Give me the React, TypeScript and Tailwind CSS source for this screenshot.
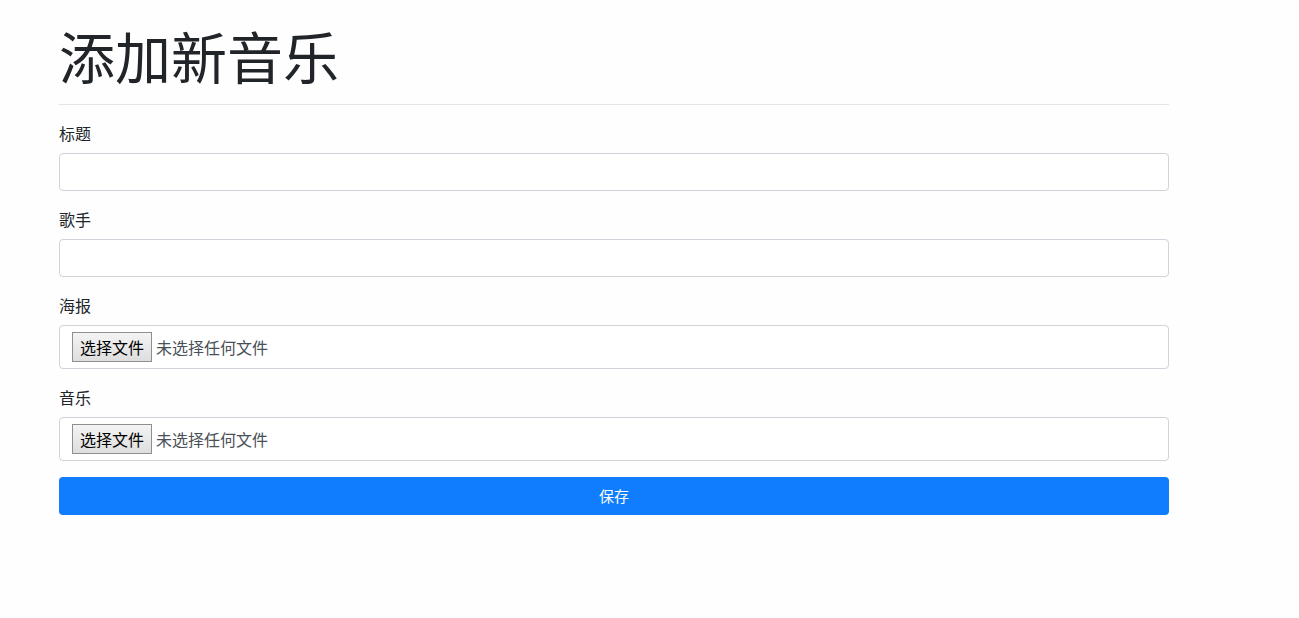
import React from 'react';

const font = { fontFamily: '"Noto Sans CJK SC", "Liberation Sans", sans-serif' };

function TextField({ label }: { label: string }) {
  return (
    <div className="mb-4">
      <label className="mb-2 block text-base leading-6 text-[#212529]">{label}</label>
      <input
        type="text"
        className="block h-[38px] w-full rounded border border-[#ced4da] bg-white px-3 text-base text-[#495057] outline-none"
      />
    </div>
  );
}

function FileField({ label }: { label: string }) {
  return (
    <div className="mb-4">
      <label className="mb-2 block text-base leading-6 text-[#212529]">{label}</label>
      <div className="flex h-[44px] w-full items-center rounded border border-[#ced4da] bg-white px-3">
        <span className="flex h-[30px] items-center border border-[#8f8f8f] bg-gradient-to-b from-[#f4f4f4] to-[#dedede] px-[7px] text-base leading-none text-black">
          选择文件
        </span>
        <span className="ml-1 text-base text-[#495057]">未选择任何文件</span>
      </div>
    </div>
  );
}

export default function App() {
  return (
    <div className="min-h-screen bg-[#fefefe]" style={font}>
      <div className="ml-[59px] w-[1110px] pt-[21px]">
        <h1 className="mb-2 text-[56px] font-normal leading-[67px] text-[#212529]">添加新音乐</h1>
        <hr className="mt-4 mb-4 border-t border-[#e5e5e5]" />
        <form>
          <TextField label="标题" />
          <TextField label="歌手" />
          <FileField label="海报" />
          <FileField label="音乐" />
          <button
            type="button"
            className="h-[38px] w-full rounded bg-[#107dff] text-[15px] text-white"
          >
            保存
          </button>
        </form>
      </div>
    </div>
  );
}
